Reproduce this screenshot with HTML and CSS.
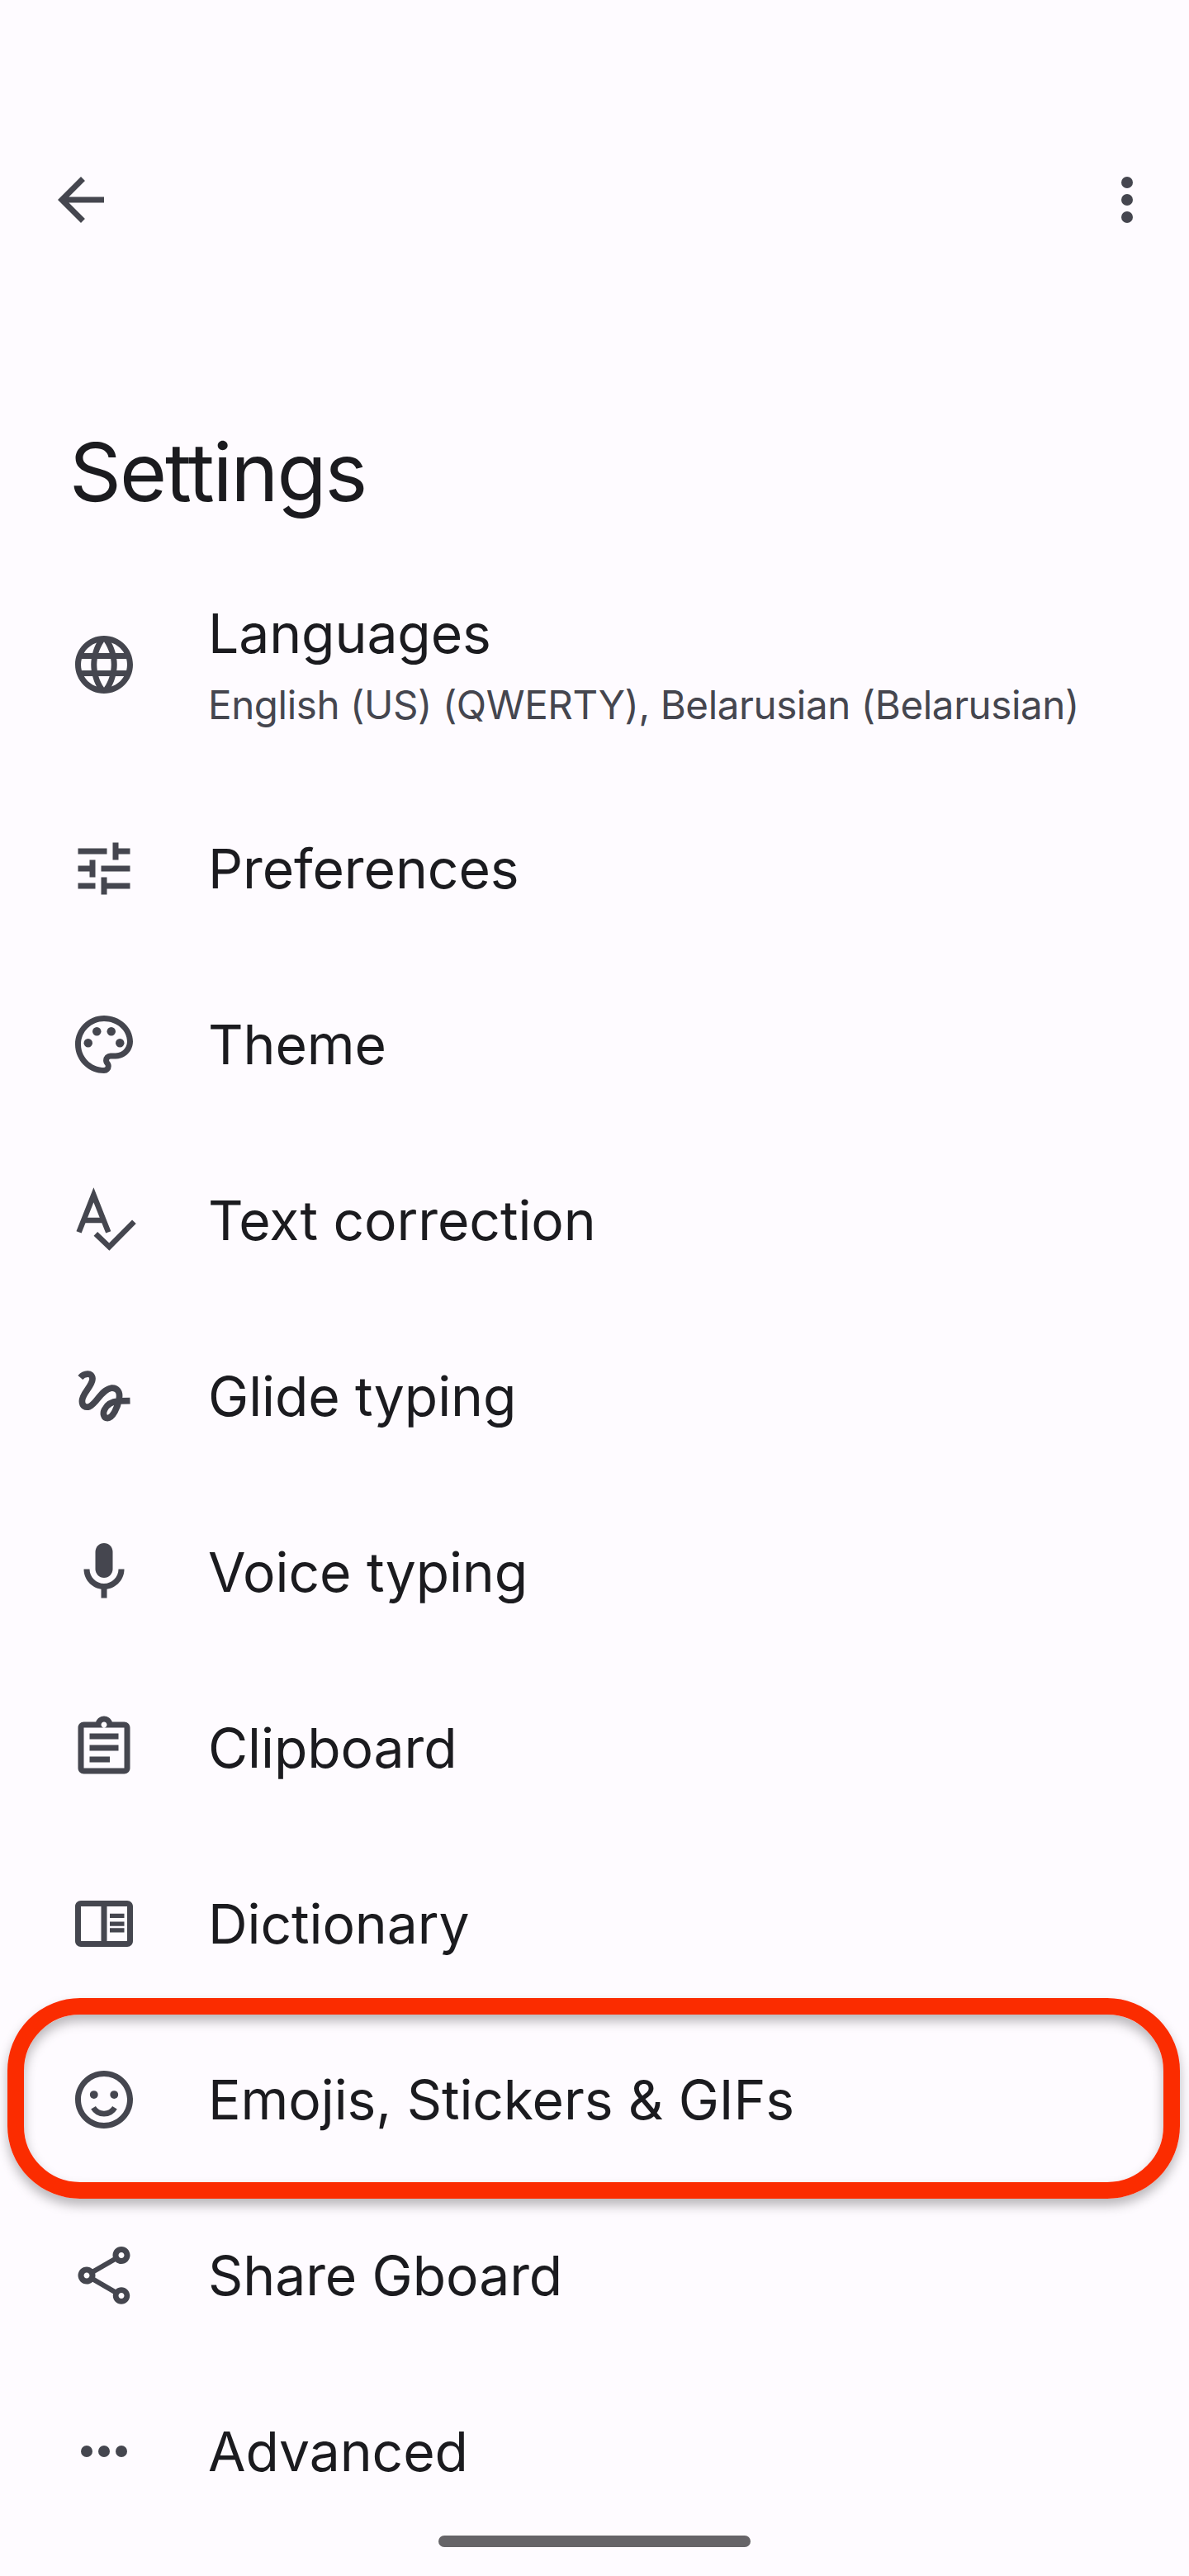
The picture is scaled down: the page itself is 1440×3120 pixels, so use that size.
FILE: index.html
```html
<!DOCTYPE html>
<html lang="en">
<head>
    <meta charset="UTF-8">
    <title>Settings</title>
    <link rel="stylesheet" href="styles.css">
</head>
<body>
    <div class="screen">
        <header class="toolbar">
            <svg class="icon" viewBox="0 0 24 24"><path d="M20 11H7.83l5.59-5.59L12 4l-8 8 8 8 1.41-1.41L7.83 13H20v-2z"/></svg>
            <svg class="icon" viewBox="0 0 24 24"><circle cx="12" cy="6" r="2"/><circle cx="12" cy="12" r="2"/><circle cx="12" cy="18" r="2"/></svg>
        </header>

        <h1 class="title">Settings</h1>

        <ul class="settings-list">
            <li class="row row-two-line">
                <svg class="icon" viewBox="0 0 24 24"><path d="M11.99 2C6.47 2 2 6.48 2 12s4.47 10 9.99 10C17.52 22 22 17.52 22 12S17.52 2 11.99 2zm6.93 6h-2.95c-.32-1.25-.78-2.45-1.38-3.56 1.84.63 3.37 1.91 4.33 3.56zM12 4.04c.83 1.2 1.48 2.53 1.91 3.96h-3.82c.43-1.43 1.08-2.76 1.91-3.96zM4.26 14C4.1 13.36 4 12.69 4 12s.1-1.36.26-2h3.38c-.08.66-.14 1.32-.14 2s.06 1.34.14 2H4.26zm.82 2h2.95c.32 1.25.78 2.45 1.38 3.56-1.84-.63-3.37-1.9-4.33-3.56zm2.95-8H5.08c.96-1.66 2.49-2.93 4.33-3.56C8.81 5.55 8.35 6.75 8.03 8zM12 19.96c-.83-1.2-1.48-2.53-1.91-3.96h3.82c-.43 1.43-1.08 2.76-1.91 3.96zM14.34 14H9.66c-.09-.66-.16-1.32-.16-2s.07-1.35.16-2h4.68c.09.65.16 1.32.16 2s-.07 1.34-.16 2zm.25 5.56c.6-1.11 1.06-2.31 1.38-3.56h2.95c-.96 1.65-2.49 2.93-4.33 3.56zM16.36 14c.08-.66.14-1.32.14-2s-.06-1.34-.14-2h3.38c.16.64.26 1.31.26 2s-.1 1.36-.26 2h-3.38z"/></svg>
                <div class="row-text">
                    <div class="row-label">Languages</div>
                    <div class="row-sub">English (US) (QWERTY), Belarusian (Belarusian)</div>
                </div>
            </li>
            <li class="row">
                <svg class="icon" viewBox="0 0 24 24"><path d="M3 17v2h6v-2H3zM3 5v2h10V5H3zm10 16v-2h8v-2h-8v-2h-2v6h2zM7 9v2H3v2h4v2h2V9H7zm14 4v-2H11v2h10zm-6-4h2V7h4V5h-4V3h-2v6z"/></svg>
                <span class="row-label">Preferences</span>
            </li>
            <li class="row">
                <svg class="icon" viewBox="0 0 24 24"><path d="M12 22C6.49 22 2 17.51 2 12S6.49 2 12 2s10 4.04 10 9c0 3.31-2.69 6-6 6h-1.77c-.28 0-.5.22-.5.5 0 .12.05.23.13.33.41.47.64 1.06.64 1.67A2.5 2.5 0 0 1 12 22zm0-18c-4.41 0-8 3.59-8 8s3.59 8 8 8c.28 0 .5-.22.5-.5a.54.54 0 0 0-.14-.35c-.41-.46-.63-1.05-.63-1.65a2.5 2.5 0 0 1 2.5-2.5H16c2.21 0 4-1.79 4-4 0-3.86-3.59-7-8-7z"/><circle cx="6.5" cy="11.5" r="1.5"/><circle cx="9.5" cy="7.5" r="1.5"/><circle cx="14.5" cy="7.5" r="1.5"/><circle cx="17.5" cy="11.5" r="1.5"/></svg>
                <span class="row-label">Theme</span>
            </li>
            <li class="row">
                <svg class="icon" viewBox="0 0 24 24"><path class="stroke stroke-thin" d="M3.3 16.1 8.4 3.2l5.100 12.900M5.200 12h6.400M9.100 16.700l4.700 4.500 8.600-8.700"/></svg>
                <span class="row-label">Text correction</span>
            </li>
            <li class="row">
                <svg class="icon" viewBox="0 0 24 24"><path class="stroke" d="M3.800 5.600C5 4.200 7.900 3.500 8 6 8 8.500 4.400 11 4.400 13.700c0 1.800 1.200 2.400 2.600 1.900 2.500-1.100 4-5.800 7.500-6.400 2-.2 3.200 1.300 2.700 3.800-.5 3-2.200 6.600-4 6.600-1.400 0-1.700-1.800-1-3 .8-1.600 2.600-2.700 4.800-2.900l4-.1"/></svg>
                <span class="row-label">Glide typing</span>
            </li>
            <li class="row">
                <svg class="icon" viewBox="0 0 24 24"><path d="M12 14c1.660 0 3-1.340 3-3V5c0-1.660-1.340-3-3-3S9 3.340 9 5v6c0 1.660 1.340 3 3 3z"/><path d="M17 11c0 2.760-2.240 5-5 5s-5-2.240-5-5H5c0 3.530 2.610 6.430 6 6.920V21h2v-3.080c3.390-.49 6-3.390 6-6.920h-2z"/></svg>
                <span class="row-label">Voice typing</span>
            </li>
            <li class="row">
                <svg class="icon" viewBox="0 0 24 24"><path d="M19 3h-4.180C14.400 1.840 13.300 1 12 1s-2.400.84-2.820 2H5c-1.100 0-2 .9-2 2v14c0 1.100.9 2 2 2h14c1.100 0 2-.9 2-2V5c0-1.100-.9-2-2-2zm-7 0c.55 0 1 .45 1 1s-.45 1-1 1-1-.45-1-1 .45-1 1-1zm7 16H5V5h14v14z"/><path d="M7 7h10v2H7zM7 11h10v2H7zM7 15h7v2H7z"/></svg>
                <span class="row-label">Clipboard</span>
            </li>
            <li class="row">
                <svg class="icon" viewBox="0 0 24 24"><path d="M20 4H4c-1.100 0-2 .9-2 2v12c0 1.100.9 2 2 2h16c1.100 0 2-.9 2-2V6c0-1.100-.9-2-2-2zM4 18V6h7v12H4zm16 0h-7V6h7v12z"/><path d="M14 8.500h5V10h-5zM14 11.250h5v1.500h-5zM14 13.500h5V15h-5z"/></svg>
                <span class="row-label">Dictionary</span>
            </li>
            <li class="row row-highlight">
                <svg class="icon" viewBox="0 0 24 24"><circle cx="8.500" cy="10.300" r="1.400"/><circle cx="15.500" cy="10.300" r="1.400"/><path d="M11.990 2C6.470 2 2 6.480 2 12s4.470 10 9.990 10C17.520 22 22 17.520 22 12S17.520 2 11.990 2zM12 20c-4.420 0-8-3.580-8-8s3.580-8 8-8 8 3.580 8 8-3.580 8-8 8z"/><path class="stroke stroke-thin" d="M8.300 14.800c.7 1.200 2.100 2.100 3.700 2.100s3-.9 3.700-2.100"/></svg>
                <span class="row-label">Emojis, Stickers &amp; GIFs</span>
            </li>
            <li class="row">
                <svg class="icon" viewBox="0 0 24 24"><path d="M18 16.080c-.76 0-1.440.3-1.960.77L8.910 12.700c.05-.23.090-.46.090-.7s-.04-.47-.09-.7l7.050-4.110c.54.5 1.250.81 2.040.81 1.660 0 3-1.340 3-3s-1.340-3-3-3-3 1.340-3 3c0 .24.040.47.090.7L8.040 9.810C7.500 9.310 6.790 9 6 9c-1.660 0-3 1.340-3 3s1.340 3 3 3c.79 0 1.500-.31 2.040-.81l7.120 4.160c-.05.21-.08.43-.08.65 0 1.610 1.310 2.920 2.920 2.920s2.920-1.310 2.920-2.920-1.310-2.920-2.920-2.920zM18 4c.55 0 1 .45 1 1s-.45 1-1 1-1-.45-1-1 .45-1 1-1zM6 13c-.55 0-1-.45-1-1s.45-1 1-1 1 .45 1 1-.45 1-1 1zm12 7.020c-.55 0-1-.45-1-1s.45-1 1-1 1 .45 1 1-.45 1-1 1z"/></svg>
                <span class="row-label">Share Gboard</span>
            </li>
            <li class="row">
                <svg class="icon" viewBox="0 0 24 24"><circle cx="6" cy="12" r="2"/><circle cx="12" cy="12" r="2"/><circle cx="18" cy="12" r="2"/></svg>
                <span class="row-label">Advanced</span>
            </li>
        </ul>

        <div class="home-bar"></div>
    </div>
</body>
</html>
```

FILE: styles.css
```css
* {
    box-sizing: border-box;
    margin: 0;
    padding: 0;
}

body {
    background: #fefbff;
    color: #1b1b1f;
    font-family: 'Inter', 'Noto Sans', sans-serif;
}

.screen {
    width: 1440px;
    height: 3120px;
    position: relative;
    overflow: hidden;
}

.icon {
    width: 84px;
    height: 84px;
    fill: #45464f;
    flex: none;
}

.icon .stroke {
    fill: none;
    stroke: #45464f;
    stroke-width: 2.2;
}

.icon .stroke-thin {
    stroke-width: 1.9;
}

.toolbar {
    display: flex;
    justify-content: space-between;
    padding: 200px 33px 0 56px;
}

.title {
    font-size: 98px;
    font-weight: 400;
    line-height: 128px;
    margin-top: 224px;
    padding-left: 84px;
    letter-spacing: -2px;
}

.settings-list {
    list-style: none;
    margin-top: 28px;
}

.row {
    display: flex;
    align-items: center;
    height: 213px;
    padding-left: 84px;
}

.row-two-line {
    height: 281px;
}

.row-text {
    display: flex;
    flex-direction: column;
    gap: 10px;
    margin-top: 4px;
}

.row-label {
    font-size: 66px;
    line-height: 84px;
    margin-left: 84px;
    letter-spacing: -0.1px;
}

.row-sub {
    font-size: 47.5px;
    line-height: 70px;
    color: #45464f;
    margin-left: 84px;
    letter-spacing: -0.4px;
}

.row-highlight {
    position: relative;
}

.row-highlight::before {
    content: "";
    box-sizing: border-box;
    position: absolute;
    left: 9px;
    top: -16px;
    width: 1420px;
    height: 243px;
    border: 20px solid #fb2c00;
    border-radius: 88px;
    box-shadow: 0 8px 14px rgba(0, 0, 0, 0.28), inset 0 8px 14px rgba(0, 0, 0, 0.28);
}

.home-bar {
    position: absolute;
    left: 531px;
    top: 3071px;
    width: 378px;
    height: 14px;
    border-radius: 7px;
    background: #666468;
}
```
